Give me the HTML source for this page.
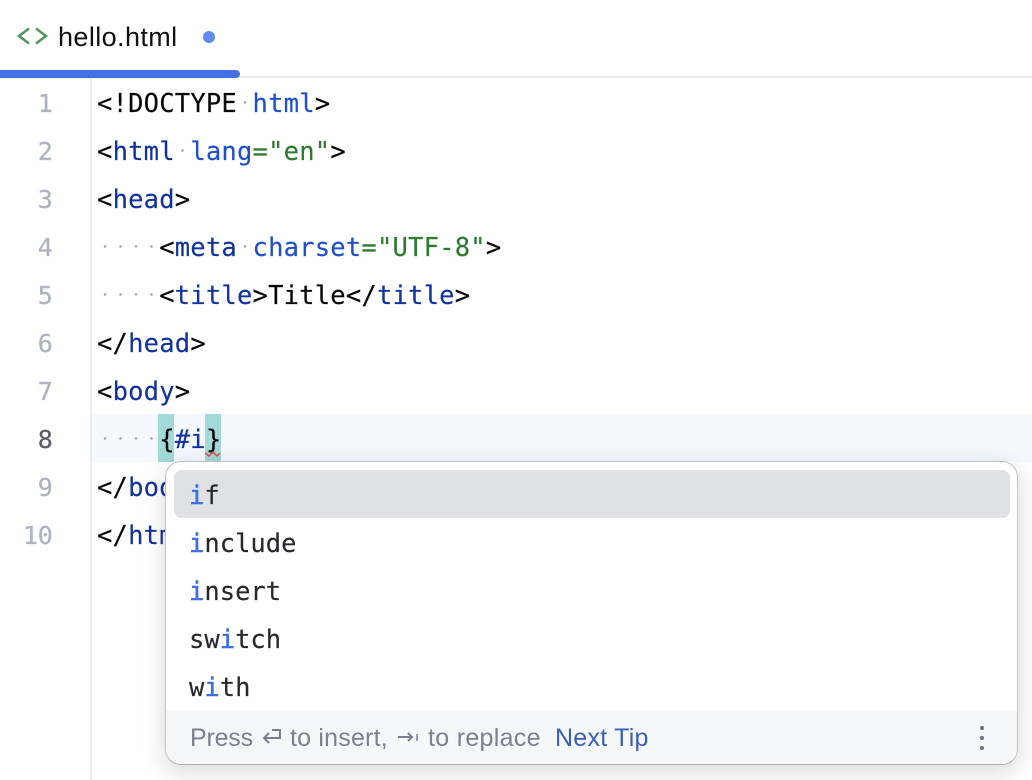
<!DOCTYPE html>
<html><head><meta charset="utf-8"><style>
html,body{margin:0;padding:0;background:#fff}
body{width:1032px;height:780px;overflow:hidden;position:relative}
.a{position:absolute}
.l,.n,.s{position:absolute;font-family:"DejaVu Sans Mono","Liberation Mono",monospace;font-size:25.5px;line-height:48px;white-space:pre;height:48px}
.l{left:97px;color:#080808;letter-spacing:.2px;-webkit-text-stroke:.15px currentColor}
.n{right:979.500px;color:#aeb3c2;text-align:right;font-size:25px;letter-spacing:-.3px;-webkit-text-stroke:.25px currentColor}
b{font-weight:normal;color:#12339f}
i{font-style:normal;color:#1f4fcf}
u{text-decoration:none;color:#2f7a2f}
em{display:inline-block;width:15.560px;height:48px;vertical-align:top;background:radial-gradient(circle at 50% 22.500px,#9ea1a8 1px,rgba(255,255,255,0) 1.500px)}
.s{left:189px;color:#27282c;-webkit-text-stroke:.15px currentColor}
.s i{color:#3d6fe6;-webkit-text-stroke:.5px currentColor}
.u{position:absolute;font-family:"Liberation Sans",sans-serif;white-space:pre}
.f{top:723px;font-size:25px;line-height:30px;color:#7c8091}
</style></head><body>
<svg class="a" style="left:17px;top:26px" width="31" height="20" fill="none" stroke="#4d965c" stroke-width="2.500"><path d="M12 2.500 2 10l10 7.500M19 2.500 29 10l-10 7.500"/></svg>
<div class="u" style="left:58px;top:22px;font-size:27px;line-height:30px;color:#111;letter-spacing:.4px">hello.html</div>
<div class="a" style="left:203px;top:31px;width:12px;height:12px;border-radius:6px;background:#5d8bef"></div>
<div class="a" style="left:0;top:76px;width:1032px;height:2px;background:#ebecf0"></div>
<div class="a" style="left:0;top:70px;width:240px;height:8px;border-radius:0 4px 4px 0;background:#4270e0"></div>
<div class="a" style="left:90px;top:78px;width:2px;height:702px;background:#ebecf0"></div>
<div class="a" style="left:92px;top:414px;width:940px;height:48px;background:#f5f8fe"></div>
<div class="a" style="left:158px;top:414px;width:16px;height:48px;background:#a3d9d8"></div>
<div class="a" style="left:205px;top:414px;width:16px;height:48px;background:#a3d9d8"></div>

<div class="n" style="top:80px">1</div>
<div class="n" style="top:128px">2</div>
<div class="n" style="top:176px">3</div>
<div class="n" style="top:224px">4</div>
<div class="n" style="top:272px">5</div>
<div class="n" style="top:320px">6</div>
<div class="n" style="top:368px">7</div>
<div class="n" style="top:416px;color:#5b5e68">8</div>
<div class="n" style="top:464px">9</div>
<div class="n" style="top:512px">10</div>

<div class="l" style="top:80px">&lt;!DOCTYPE<em></em><i>html</i>&gt;</div>
<div class="l" style="top:128px">&lt;<b>html</b><em></em><i>lang</i><u>="en"</u>&gt;</div>
<div class="l" style="top:176px">&lt;<b>head</b>&gt;</div>
<div class="l" style="top:224px"><em></em><em></em><em></em><em></em>&lt;<b>meta</b><em></em><i>charset</i><u>="UTF-8"</u>&gt;</div>
<div class="l" style="top:272px"><em></em><em></em><em></em><em></em>&lt;<b>title</b>&gt;Title&lt;/<b>title</b>&gt;</div>
<div class="l" style="top:320px">&lt;/<b>head</b>&gt;</div>
<div class="l" style="top:368px">&lt;<b>body</b>&gt;</div>
<div class="l" style="top:416px"><em></em><em></em><em></em><em></em>{<b>#i</b>}</div>
<div class="l" style="top:464px">&lt;/<b>body</b>&gt;</div>
<div class="l" style="top:512px">&lt;/<b>html</b>&gt;</div>
<svg class="a" style="left:203px;top:450px" width="18" height="8" fill="none" stroke="#e0483e" stroke-width="1.500"><path d="M2 3 6 6 10 2 14 6 17 3"/></svg>

<div class="a" style="left:165px;top:461px;width:853px;height:304px;box-sizing:border-box;background:#fff;border:1px solid #c0c2c8;border-bottom-color:#aeb0b6;border-radius:16px;box-shadow:0 6px 24px rgba(0,0,0,.16);overflow:hidden">
<div class="a" style="left:0;top:248px;width:853px;height:60px;background:#f6f7f9"></div>
</div>
<div class="a" style="left:174px;top:470px;width:836px;height:48px;border-radius:8px;background:#dfe1e5"></div>
<div class="s" style="top:472px"><i>i</i>f</div>
<div class="s" style="top:520px"><i>i</i>nclude</div>
<div class="s" style="top:568px"><i>i</i>nsert</div>
<div class="s" style="top:616px">sw<i>i</i>tch</div>
<div class="s" style="top:664px">w<i>i</i>th</div>

<div class="u f" style="left:190px;letter-spacing:-.2px">Press</div>
<svg class="a" style="left:261px;top:727px" width="22" height="20" fill="none" stroke="#7c8091" stroke-width="2"><path d="M11 3h8v8H3M8 6l-5 5 5 5"/></svg>
<div class="u f" style="left:290px;letter-spacing:.2px">to insert,</div>
<svg class="a" style="left:397px;top:727px" width="22" height="20" fill="none" stroke="#7c8091" stroke-width="2"><path d="M1 10h14M11 6l4 4-4 4"/><path d="M20 7v7" stroke-width="1.500"/></svg>
<div class="u f" style="left:428px;letter-spacing:.3px">to replace</div>
<div class="u f" style="left:555px;color:#3a5fb8;letter-spacing:.25px">Next Tip</div>
<div class="a" style="left:980px;top:726px;width:4px;height:4px;border-radius:2px;background:#6c6f80"></div>
<div class="a" style="left:980px;top:736px;width:4px;height:4px;border-radius:2px;background:#6c6f80"></div>
<div class="a" style="left:980px;top:746px;width:4px;height:4px;border-radius:2px;background:#6c6f80"></div>
</body></html>
